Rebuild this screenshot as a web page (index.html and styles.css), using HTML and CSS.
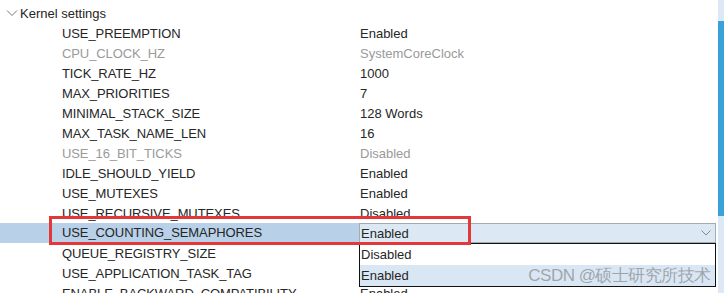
FILE: index.html
```html
<!DOCTYPE html>
<html lang="en">
<head>
    <meta charset="UTF-8">
    <title>Kernel settings</title>
    <link rel="stylesheet" href="styles.css">
</head>
<body>
    <div class="window">
        <div class="panel">
            <div class="group">
                <svg class="chevron" width="12" height="8" viewBox="0 0 12 8"><path d="M1 1.5 L6 6.5 L11 1.5" fill="none" stroke="#777" stroke-width="1"/></svg>
                <span>Kernel settings</span>
            </div>
            <div class="row"><span class="name">USE_PREEMPTION</span><span class="value">Enabled</span></div>
            <div class="row off"><span class="name">CPU_CLOCK_HZ</span><span class="value">SystemCoreClock</span></div>
            <div class="row"><span class="name">TICK_RATE_HZ</span><span class="value">1000</span></div>
            <div class="row"><span class="name">MAX_PRIORITIES</span><span class="value">7</span></div>
            <div class="row"><span class="name">MINIMAL_STACK_SIZE</span><span class="value">128 Words</span></div>
            <div class="row"><span class="name">MAX_TASK_NAME_LEN</span><span class="value">16</span></div>
            <div class="row off"><span class="name">USE_16_BIT_TICKS</span><span class="value">Disabled</span></div>
            <div class="row"><span class="name">IDLE_SHOULD_YIELD</span><span class="value">Enabled</span></div>
            <div class="row"><span class="name">USE_MUTEXES</span><span class="value">Enabled</span></div>
            <div class="row"><span class="name">USE_RECURSIVE_MUTEXES</span><span class="value">Disabled</span></div>
            <div class="row selected">
                <span class="name">USE_COUNTING_SEMAPHORES</span>
                <div class="combo">
                    <span>Enabled</span>
                    <svg width="10" height="6" viewBox="0 0 10 6"><path d="M0.5 0.5 L5 5 L9.5 0.5" fill="none" stroke="#888" stroke-width="1"/></svg>
                    <div class="options">
                        <div class="option">Disabled</div>
                        <div class="option hover">Enabled<span class="mark">CSDN @硕士研究所技术</span></div>
                    </div>
                </div>
                <div class="callout"></div>
            </div>
            <div class="row"><span class="name">QUEUE_REGISTRY_SIZE</span><span class="value">8</span></div>
            <div class="row"><span class="name">USE_APPLICATION_TASK_TAG</span><span class="value">Disabled</span></div>
            <div class="row"><span class="name">ENABLE_BACKWARD_COMPATIBILITY</span><span class="value">Enabled</span></div>
        </div>
        <div class="scrollbar"><div class="thumb"></div></div>
    </div>
</body>
</html>
```

FILE: styles.css
```css
body {
    margin: 0;
    background: white;
    font-family: "Liberation Sans", Arial, sans-serif;
    font-size: 13px;
    color: #262626;
    overflow: hidden;
}
.window {
    display: flex;
    height: 293px;
    overflow: hidden;
}
.panel {
    flex: 1;
    padding-top: 3px;
    padding-right: 2px;
}
.group {
    display: flex;
    align-items: center;
    height: 20px;
    gap: 2px;
}
.chevron {
    margin-left: 6px;
}
.row {
    display: grid;
    grid-template-columns: 359px 1fr;
    align-items: center;
    height: 20px;
    position: relative;
}
.row .name {
    padding-left: 62px;
    letter-spacing: -0.1px;
}
.row .value {
    padding-left: 1px;
}
.row.off {
    color: #9a9a9a;
}
.row.selected .name {
    background: #b9d1e8;
    height: 20px;
    line-height: 20px;
}
.combo {
    position: relative;
    height: 20px;
    box-sizing: border-box;
    border: 1px solid #a5aab0;
    background: #dce8f4;
    display: flex;
    align-items: center;
    justify-content: space-between;
    padding: 0 4px 0 1px;
}
.options {
    position: absolute;
    top: 19px;
    left: -1px;
    right: -1px;
    border: 1px solid #111;
    background: white;
    z-index: 2;
}
.option {
    height: 21px;
    line-height: 21px;
    padding-left: 1px;
    position: relative;
}
.option.hover {
    background: #d9e6f3;
}
.mark {
    position: absolute;
    right: 4px;
    top: 0;
    font-size: 17px;
    color: rgba(120, 120, 120, 0.6);
    letter-spacing: -0.5px;
}
.callout {
    position: absolute;
    left: 49px;
    top: -7px;
    width: 422px;
    height: 29px;
    box-sizing: border-box;
    border: 3px solid #e2383a;
    z-index: 3;
}
.scrollbar {
    width: 6px;
    background: #dce9f5;
    padding-top: 21px;
}
.thumb {
    height: 195px;
    background: #3aa2d8;
}
```
